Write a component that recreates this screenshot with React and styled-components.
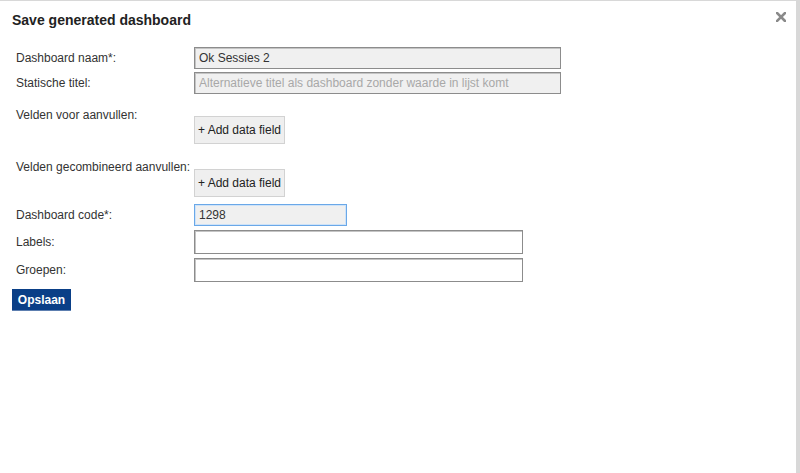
import React, { useState } from 'react';
import styled, { createGlobalStyle } from 'styled-components';

const GlobalStyle = createGlobalStyle`
  html, body {
    margin: 0;
    padding: 0;
    height: 100%;
    background: #d8d8d8;
  }
  body {
    font-family: "Liberation Sans", Arial, sans-serif;
    font-size: 12px;
    color: #333;
  }
`;

export default function App() {
  const [naam, setNaam] = useState('Ok Sessies 2');
  const [titel, setTitel] = useState('');
  const [code, setCode] = useState('1298');
  const [labels, setLabels] = useState('');
  const [groepen, setGroepen] = useState('');

  return (<>
    <GlobalStyle />
    <Dialog>
      <Header>
        <Title>Save generated dashboard</Title>
        <Close aria-label="close">
          <svg width="10" height="10" viewBox="0 0 10 10">
            <path d="M1 1 L9 9 M9 1 L1 9" stroke="#8a8a8a" strokeWidth="2.6" strokeLinecap="square" />
          </svg>
        </Close>
      </Header>
      <Form>
        <Row $after={3}>
          <Label>Dashboard naam*:</Label>
          <TextInput $width={367} $grey value={naam} onChange={e => { setNaam(e.target.value) }} />
        </Row>
        <Row $after={14}>
          <Label>Statische titel:</Label>
          <TextInput $width={367} $grey value={titel} placeholder="Alternatieve titel als dashboard zonder waarde in lijst komt" onChange={e => { setTitel(e.target.value) }} />
        </Row>
        <Row $after={16} $top>
          <Label>Velden voor aanvullen:</Label>
          <AddButton $offset={8}>+ Add data field</AddButton>
        </Row>
        <Row $after={7} $top>
          <Label>Velden gecombineerd aanvullen:</Label>
          <AddButton $offset={9}>+ Add data field</AddButton>
        </Row>
        <Row $after={4}>
          <Label>Dashboard code*:</Label>
          <TextInput $width={153} $grey $focused value={code} onChange={e => { setCode(e.target.value) }} />
        </Row>
        <Row $after={4}>
          <Label>Labels:</Label>
          <TextInput $width={329} $tall value={labels} onChange={e => { setLabels(e.target.value) }} />
        </Row>
        <Row $after={7}>
          <Label>Groepen:</Label>
          <TextInput $width={329} $tall value={groepen} onChange={e => { setGroepen(e.target.value) }} />
        </Row>
      </Form>
      <SaveButton>Opslaan</SaveButton>
    </Dialog>
  </>);
}

const Dialog = styled.div`
  box-sizing: border-box;
  margin: 1px 4px 0 0;
  height: calc(100vh - 1px);
  background: #ffffff;
  padding: 0 0 0 12px;
`;

const Header = styled.div`
  display: flex;
  align-items: center;
  justify-content: space-between;
  height: 38px;
  padding-right: 8px;
`;

const Title = styled.h1`
  margin: 0;
  font-size: 14px;
  font-weight: bold;
  color: #222;
`;

const Close = styled.button`
  display: flex;
  align-items: center;
  justify-content: center;
  width: 14px;
  height: 14px;
  padding: 0;
  border: 0;
  background: none;
  margin-top: -6px;
  cursor: pointer;
`;

const Form = styled.div`
  padding: 8px 0 0 4px;
`;

const Row = styled.div`
  display: grid;
  grid-template-columns: 178px auto;
  align-items: ${p => (p.$top ? 'start' : 'center')};
  justify-items: start;
  margin-bottom: ${p => p.$after}px;
`;

const Label = styled.label`
  font-size: 12px;
  line-height: 14px;
  color: #333;
`;

const TextInput = styled.input`
  box-sizing: border-box;
  width: ${p => p.$width}px;
  height: ${p => (p.$tall ? 24 : 22)}px;
  margin: 0;
  padding: 0 4px;
  font-family: "Liberation Sans", Arial, sans-serif;
  font-size: 12px;
  color: #333;
  background: ${p => (p.$grey ? '#f0f0f0' : '#ffffff')};
  border: 1px solid ${p => (p.$focused ? '#6aa8e8' : '#8c8c8c')};
  box-shadow: ${p => (p.$focused ? 'inset 0 0 0 1px #cfe3f8' : 'inset 1px 1px 0 #c4c4c4')};
  outline: none;
  &::placeholder {
    color: #a8a8a8;
  }
`;

const AddButton = styled.button`
  box-sizing: border-box;
  margin-top: ${p => p.$offset}px;
  height: 28px;
  width: 91px;
  padding: 0;
  font-family: "Liberation Sans", Arial, sans-serif;
  font-size: 12px;
  color: #222;
  background: #efefef;
  border: 1px solid #d2d2d2;
  border-radius: 0;
  cursor: pointer;
`;

const SaveButton = styled.button`
  box-sizing: border-box;
  height: 22px;
  width: 59px;
  padding: 0;
  font-family: "Liberation Sans", Arial, sans-serif;
  font-size: 12px;
  font-weight: bold;
  color: #ffffff;
  background: #0a3f87;
  border: 0;
  border-bottom: 1px solid #5d7fb0;
  cursor: pointer;
`;
